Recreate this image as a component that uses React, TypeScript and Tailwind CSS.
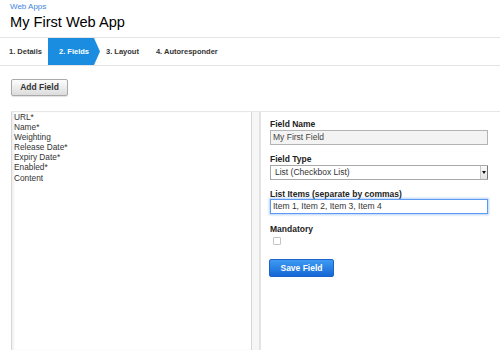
import React from "react";

export default function App() {
  const items = ["URL*", "Name*", "Weighting", "Release Date*", "Expiry Date*", "Enabled*", "Content"];
  return (
    <div className="w-[500px] h-[350px] bg-white overflow-hidden flex flex-col font-['Liberation_Sans',Arial,sans-serif] text-[#222]">
      <div className="px-[10px]">
        <div className="h-[13px] leading-[13px] text-[8px] text-[#3d86e0]">Web Apps</div>
        <div className="h-[18px] leading-[18px] text-[14.6px] text-black">My First Web App</div>
      </div>
      <div className="mt-[6px] h-[29px] border-y border-[#e4e4e4] flex items-stretch text-[7.5px] font-bold text-[#333]">
        <div className="pl-[9px] w-[48px] flex items-center">1. Details</div>
        <div className="w-[52px] bg-[#1a8de0] text-white flex items-center pl-[11px] [clip-path:polygon(0_0,calc(100%-6px)_0,100%_50%,calc(100%-6px)_100%,0_100%)]">
          2. Fields
        </div>
        <div className="pl-[6px] flex items-center">3. Layout</div>
        <div className="pl-[17px] flex items-center">4. Autoresponder</div>
      </div>
      <div className="pl-[11px] mt-[13px]">
        <button className="w-[57px] h-[17px] rounded-[2px] border border-[#a9a9a9] bg-gradient-to-b from-[#fdfdfd] to-[#dcdcdc] shadow-[0_1px_1px_rgba(0,0,0,0.12)] text-[8.5px] font-bold text-[#333] flex items-center justify-center">
          Add Field
        </button>
      </div>
      <div className="mt-[15px] ml-[11px] flex-1 flex border-t border-[#e6e6e6]">
        <div className="w-[241px] border-l border-r border-[#d6d6d6] shadow-[inset_2px_0_2px_rgba(0,0,0,0.06)] pl-[2px] text-[8.3px] leading-[10.1px] text-[#333]">
          {items.map((it) => (
            <div key={it}>{it}</div>
          ))}
        </div>
        <div className="w-[7px] bg-[#f6f6f6]" />
        <div className="w-[2px] bg-[#e3e3e3]" />
        <div className="flex-1 pl-[9px] pt-[7px] flex flex-col items-start">
          <div className="h-[10px] leading-[10px] text-[8.5px] font-bold">Field Name</div>
          <div className="mt-[1px] w-[218px] h-[15px] border border-[#b4b4b4] bg-[#f3f3f3] text-[8.5px] text-[#444] pl-[2px] flex items-center">
            My First Field
          </div>
          <div className="mt-[9px] h-[10px] leading-[10px] text-[8.5px] font-bold">Field Type</div>
          <div className="mt-[1px] w-[218px] h-[15px] border border-[#a8a8a8] bg-white text-[8.5px] text-[#333] pl-[4px] flex items-center justify-between">
            <span>List (Checkbox List)</span>
            <div className="w-[7px] h-full border-l border-[#c8c8c8] bg-gradient-to-b from-[#fafafa] to-[#e4e4e4] shadow-[1px_0_0_#777] flex items-center justify-center">
              <svg width="4" height="3" viewBox="0 0 4 3">
                <path d="M0 0 L4 0 L2 3 Z" fill="#111" />
              </svg>
            </div>
          </div>
          <div className="mt-[9px] h-[10px] leading-[10px] text-[8.5px] font-bold">List Items (separate by commas)</div>
          <div className="w-[218px] h-[15px] border border-[#5d9bf0] shadow-[0_0_2px_1px_rgba(90,150,240,0.45)] bg-white text-[8.5px] text-[#333] pl-[2px] flex items-center">
            Item 1, Item 2, Item 3, Item 4
          </div>
          <div className="mt-[10px] h-[10px] leading-[10px] text-[8.5px] font-bold">Mandatory</div>
          <div className="mt-[3px] ml-[3px] w-[8px] h-[8px] border border-[#c4c4c4] rounded-[1px] bg-white" />
          <button className="mt-[14px] -ml-[1px] w-[65px] h-[18px] rounded-[2px] border border-[#1c62c8] bg-gradient-to-b from-[#3f9bf2] to-[#1566d6] text-white text-[8.5px] font-bold flex items-center justify-center">
            Save Field
          </button>
        </div>
      </div>
    </div>
  );
}
